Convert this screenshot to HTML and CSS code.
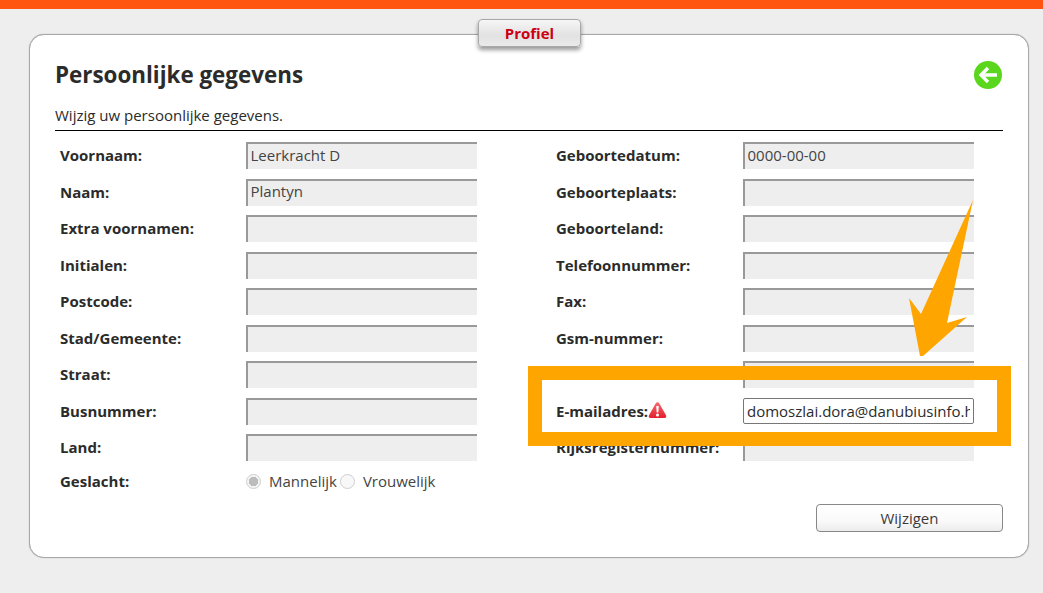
FILE: index.html
```html
<!DOCTYPE html>
<html lang="nl">
<head>
<meta charset="utf-8">
<title>Profiel</title>
<link rel="stylesheet" href="styles.css">
</head>
<body>
<div class="topbar"></div>
<main class="card">
  <div class="tab">Profiel</div>
  <header class="head">
    <h1>Persoonlijke gegevens</h1>
    <a class="back" href="#" aria-label="Terug">
      <svg width="28" height="28" viewBox="0 0 28 28"><circle cx="14" cy="14" r="14" fill="#5ad61c"/><path d="M23 14H7.5M14 7l-7 7 7 7" fill="none" stroke="#fff" stroke-width="3.4"/></svg>
    </a>
  </header>
  <p class="intro">Wijzig uw persoonlijke gegevens.</p>
  <form class="form">
    <div class="col">
      <label class="row"><span class="lab">Voornaam:</span><input class="field" value="Leerkracht D" disabled></label>
      <label class="row"><span class="lab">Naam:</span><input class="field" value="Plantyn" disabled></label>
      <label class="row"><span class="lab">Extra voornamen:</span><input class="field" disabled></label>
      <label class="row"><span class="lab">Initialen:</span><input class="field" disabled></label>
      <label class="row"><span class="lab">Postcode:</span><input class="field" disabled></label>
      <label class="row"><span class="lab">Stad/Gemeente:</span><input class="field" disabled></label>
      <label class="row"><span class="lab">Straat:</span><input class="field" disabled></label>
      <label class="row"><span class="lab">Busnummer:</span><input class="field" disabled></label>
      <label class="row"><span class="lab">Land:</span><input class="field" disabled></label>
      <div class="row row-radio"><span class="lab lab-radio">Geslacht:</span>
        <div class="radios">
          <span class="radio on"></span><span class="rtext">Mannelijk</span>
          <span class="radio"></span><span class="rtext">Vrouwelijk</span>
        </div>
      </div>
    </div>
    <div class="col col-right">
      <label class="row"><span class="lab">Geboortedatum:</span><input class="field" value="0000-00-00" disabled></label>
      <label class="row"><span class="lab">Geboorteplaats:</span><input class="field" disabled></label>
      <label class="row"><span class="lab">Geboorteland:</span><input class="field" disabled></label>
      <label class="row"><span class="lab">Telefoonnummer:</span><input class="field" disabled></label>
      <label class="row"><span class="lab">Fax:</span><input class="field" disabled></label>
      <label class="row"><span class="lab">Gsm-nummer:</span><input class="field" disabled></label>
      <label class="row"><span class="lab">Stamnummer:</span><input class="field" disabled></label>
      <label class="row"><span class="lab lab-warn">E-mailadres:<svg class="warn" width="19" height="18" viewBox="0 0 19 18"><defs><linearGradient id="warnfill" x1="0" y1="0" x2="0" y2="1"><stop offset="0" stop-color="#f86a70"/><stop offset="1" stop-color="#e4202c"/></linearGradient></defs><path d="M9.5 1.2C8.6 1.2 8 1.9 7.5 2.8L1 14.2C.3 15.6 1 17 2.5 17h14c1.5 0 2.2-1.4 1.5-2.8L11.5 2.8C11 1.9 10.4 1.2 9.5 1.2z" fill="url(#warnfill)"/><path d="M8.2 5h2.6l-.5 6.6H8.7z" fill="#fff"/><circle cx="9.5" cy="14" r="1.5" fill="#fff"/></svg></span><input class="field field-active" value="domoszlai.dora@danubiusinfo.hu"></label>
      <label class="row"><span class="lab">Rijksregisternummer:</span><input class="field" disabled></label>
    </div>
  </form>
  <div class="actions"><button type="button" class="btn">Wijzigen</button></div>
</main>
<div class="highlight"></div>
<svg class="arrow" width="70" height="160" viewBox="0 0 70 160"><path d="M64 1 38 124 58 118 14 157 11 157 0 99 12 115z" fill="#ffa500"/></svg>
</body>
</html>
```

FILE: styles.css
```css
* { box-sizing: border-box; }
html, body { margin: 0; padding: 0; }
body {
  position: relative;
  height: 593px;
  overflow: hidden;
  background: #eeeeee;
  color: #2b2b2b;
  font-family: "Open Sans", sans-serif;
  font-size: 15px;
}
.topbar { height: 9px; background: #ff5511; }
.card {
  position: relative;
  width: 1000px;
  height: 524px;
  margin: 25px 0 0 29px;
  padding: 23px 25px 0 25px;
  background: #fff;
  border: 1px solid #a8a8a8;
  border-radius: 15px;
  box-shadow: 0 0 1px #999;
}
.tab {
  position: absolute;
  top: -16px;
  left: 448px;
  width: 103px;
  height: 28px;
  background: linear-gradient(#f6f6f6, #e2e2e2 60%, #eaeaea);
  border: 1px solid #a8a8a8;
  border-radius: 4px;
  box-shadow: 0 3px 4px rgba(0, 0, 0, .4);
  color: #cc0011;
  font-weight: 700;
  font-size: 15px;
  line-height: 26px;
  text-align: center;
}
.head { display: flex; justify-content: space-between; align-items: center; height: 34px; }
h1 { margin: 0; font-size: 22.4px; font-weight: 700; color: #2b2b2b; line-height: 32px; }
.back { display: block; height: 28px; margin: -1px 1px 0 0; }
.intro {
  margin: 0;
  padding-top: 11px;
  height: 39px;
  border-bottom: 1px solid #000;
  font-size: 15px;
  line-height: 24px;
}
.form { display: flex; padding: 11px 0 0 5px; }
.col { display: flex; flex: none; flex-direction: column; gap: 9.5px; width: 496px; }
.col-right { width: 418px; }
.row { display: grid; grid-template-columns: 186px 231px; align-items: center; height: 27px; }
.col-right .row { grid-template-columns: 187px 231px; }
.lab { font-weight: 700; font-size: 15px; margin-bottom: 1px; }
.lab-radio { margin: 1px 0 0; }
.lab-warn { display: flex; align-items: center; }
.warn { margin-bottom: 1px; }
.field {
  width: 231px;
  height: 27px;
  padding: 0 3px 4px 2.5px;
  border: 0;
  border-top: 2px solid #999;
  border-left: 2px solid #999;
  border-radius: 0;
  background: #eeeeee;
  color: #444;
  font-family: "Open Sans", sans-serif;
  font-size: 15px;
  outline: 0;
}
.field-active {
  height: 26px;
  align-self: start;
  padding: 0 3px;
  border: 1px solid #777;
  border-radius: 2px;
  background: #fff;
  color: #2b2b2b;
}
.row-radio { height: 24px; margin-top: -2px; }
.radios { display: flex; align-items: center; }
.radio {
  width: 15px;
  height: 15px;
  margin-top: 2px;
  border: 1px solid #cfcfcf;
  border-radius: 50%;
  background: #f8f8f8;
}
.radio.on { background: radial-gradient(circle, #bcbcbc 0 4.5px, #f4f4f4 5px); margin-right: 8px; }
.rtext { color: #444; font-size: 15px; }
.rtext + .radio { margin: 2px 8px 0 3px; }
.actions { position: absolute; top: 469px; right: 25px; }
.btn {
  display: block;
  width: 187px;
  height: 28px;
  padding: 0;
  background: linear-gradient(#fff, #fafafa 60%, #ececec);
  border: 1px solid #888;
  border-radius: 4px;
  color: #3a3a3a;
  font-family: "Open Sans", sans-serif;
  font-size: 15px;
}
.highlight {
  position: absolute;
  left: 528px;
  top: 366px;
  width: 483px;
  height: 80px;
  border: 14px solid #ffa500;
}
.arrow { position: absolute; left: 909px; top: 199px; }
```
